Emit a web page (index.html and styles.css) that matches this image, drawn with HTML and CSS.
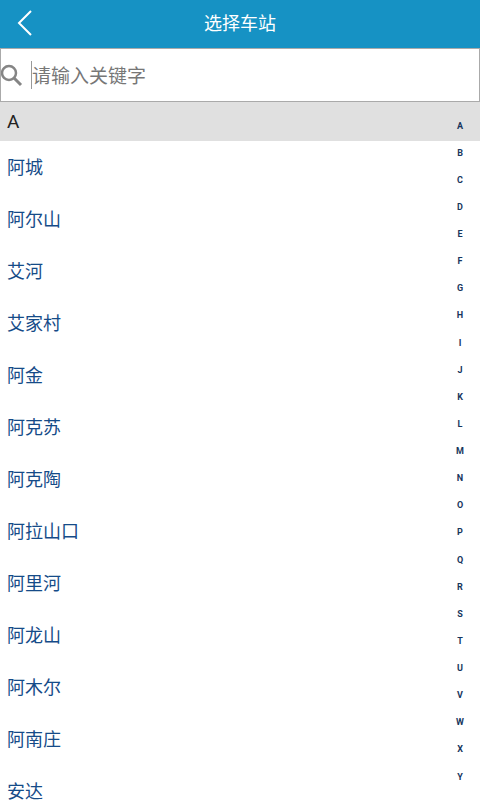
FILE: index.html
```html
<!DOCTYPE html>
<html lang="zh-CN">
<head>
    <meta charset="UTF-8">
    <meta name="viewport" content="width=device-width, initial-scale=1">
    <title>选择车站</title>
    <link rel="stylesheet" href="styles.css">
</head>
<body>
    <header class="topbar">
        <button type="button" class="back" aria-label="返回">
            <svg width="16" height="28" viewBox="0 0 16 28"><path d="M14 1 L2 13 L14 25" fill="none" stroke="currentColor" stroke-width="2"/></svg>
        </button>
        <h1>选择车站</h1>
    </header>

    <form class="search">
        <label for="keyword" aria-label="搜索">
            <svg width="22" height="24" viewBox="0 0 22 24" fill="none" stroke="currentColor">
                <circle cx="8" cy="10" r="7" stroke-width="2.5"/>
                <path d="M13 15 L20 22" stroke-width="3"/>
            </svg>
        </label>
        <input type="text" id="keyword" placeholder="请输入关键字">
    </form>

    <main class="stations">
        <div class="list">
            <h2>A</h2>
            <ul>
                <li><a href="#">阿城</a></li>
                <li><a href="#">阿尔山</a></li>
                <li><a href="#">艾河</a></li>
                <li><a href="#">艾家村</a></li>
                <li><a href="#">阿金</a></li>
                <li><a href="#">阿克苏</a></li>
                <li><a href="#">阿克陶</a></li>
                <li><a href="#">阿拉山口</a></li>
                <li><a href="#">阿里河</a></li>
                <li><a href="#">阿龙山</a></li>
                <li><a href="#">阿木尔</a></li>
                <li><a href="#">阿南庄</a></li>
                <li><a href="#">安达</a></li>
            </ul>
        </div>
        <nav class="letters">
            <a href="#">A</a>
            <a href="#">B</a>
            <a href="#">C</a>
            <a href="#">D</a>
            <a href="#">E</a>
            <a href="#">F</a>
            <a href="#">G</a>
            <a href="#">H</a>
            <a href="#">I</a>
            <a href="#">J</a>
            <a href="#">K</a>
            <a href="#">L</a>
            <a href="#">M</a>
            <a href="#">N</a>
            <a href="#">O</a>
            <a href="#">P</a>
            <a href="#">Q</a>
            <a href="#">R</a>
            <a href="#">S</a>
            <a href="#">T</a>
            <a href="#">U</a>
            <a href="#">V</a>
            <a href="#">W</a>
            <a href="#">X</a>
            <a href="#">Y</a>
        </nav>
    </main>
</body>
</html>
```
FILE: styles.css
```css
* { box-sizing: border-box; }
body { display: flex; flex-direction: column; height: 100vh; margin: 0; overflow: hidden; background: #fff; font-family: Roboto, "Noto Sans CJK SC", sans-serif; }
h1, h2, ul { margin: 0; padding: 0; font-weight: normal; }
a { text-decoration: none; }
svg { display: block; }

.topbar { display: grid; grid-template-columns: 48px 1fr 48px; align-items: center; height: 48px; flex: none; background: #1692c4; color: #fff; }
.topbar h1 { font-size: 18px; line-height: 24px; text-align: center; }
.back { height: 44px; padding: 0 0 0 17px; border: none; background: none; color: #fff; cursor: pointer; }

.search { display: flex; align-items: center; height: 54px; flex: none; border: 1px solid #aaa; color: #858585; }
.search label { width: 30px; flex: none; }
.search input { flex: 1; min-width: 0; height: 28px; padding: 2px 0 0; border: none; border-left: 1px solid #999; outline: none; background: none; font: inherit; font-size: 19px; color: #333; }
.search input::placeholder { color: #777; }

.stations { position: relative; flex: 1; min-height: 0; }
.list { height: 100%; overflow: hidden; }
.list h2 { padding: 0 7px; background: #e0e0e0; color: #222; font-size: 19px; line-height: 39px; }
.list ul { padding-top: 1px; list-style: none; }
.list li a { display: block; padding: 0 7px; color: #154b88; font-size: 18px; line-height: 52px; }

/* letter index lies over the list */
.letters { position: absolute; top: 0; right: 0; bottom: 0; display: flex; flex-direction: column; width: 40px; padding: 10px 0; }
.letters a { display: flex; flex: 1; align-items: center; justify-content: center; color: #17365d; font-size: 9px; font-weight: bold; line-height: 12px; }
```
